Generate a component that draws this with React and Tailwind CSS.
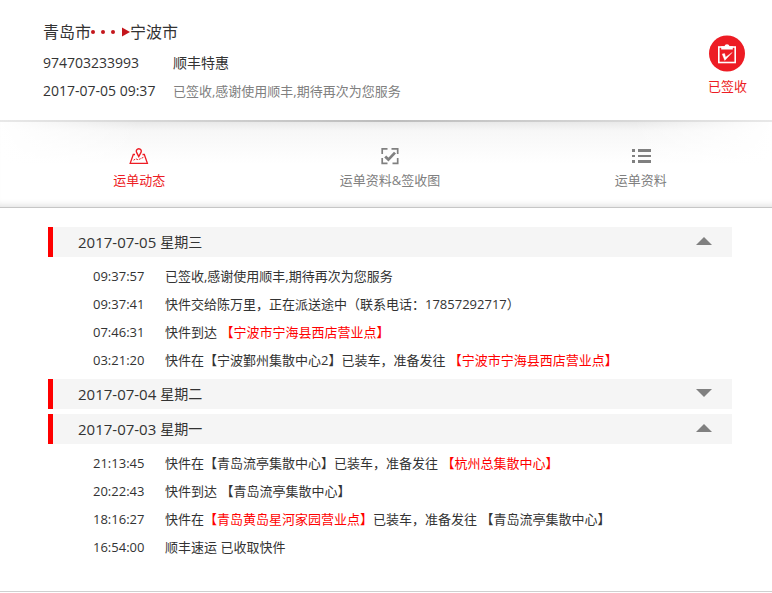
import React, { useState } from 'react';

const days = [
  {
    date: '2017-07-05',
    weekday: '星期三',
    open: true,
    events: [
      { time: '09:37:57', text: ['已签收,感谢使用顺丰,期待再次为您服务'] },
      { time: '09:37:41', text: ['快件交给陈万里，正在派送途中（联系电话：17857292717）'] },
      { time: '07:46:31', text: ['快件到达 ', { place: '【宁波市宁海县西店营业点】' }] },
      {
        time: '03:21:20',
        text: ['快件在【宁波鄞州集散中心2】已装车，准备发往 ', { place: '【宁波市宁海县西店营业点】' }],
      },
    ],
  },
  {
    date: '2017-07-04',
    weekday: '星期二',
    open: false,
    events: [],
  },
  {
    date: '2017-07-03',
    weekday: '星期一',
    open: true,
    events: [
      {
        time: '21:13:45',
        text: ['快件在【青岛流亭集散中心】已装车，准备发往 ', { place: '【杭州总集散中心】' }],
      },
      { time: '20:22:43', text: ['快件到达 【青岛流亭集散中心】'] },
      {
        time: '18:16:27',
        text: ['快件在', { place: '【青岛黄岛星河家园营业点】' }, '已装车，准备发往 【青岛流亭集散中心】'],
      },
      { time: '16:54:00', text: ['顺丰速运 已收取快件'] },
    ],
  },
];

function RouteArrow() {
  return (
    <svg width="39" height="12" viewBox="0 0 39 12" fill="#c4161c" aria-hidden="true">
      <circle cx="2" cy="6" r="2" />
      <circle cx="12" cy="6" r="2" />
      <circle cx="22" cy="6" r="2" />
      <path d="M31 1.5 39 6l-8 4.5z" />
    </svg>
  );
}

function SignedIcon() {
  return (
    <svg width="36" height="37" viewBox="0 0 36 37" aria-hidden="true">
      <circle cx="18" cy="18.5" r="18" fill="#ed1c24" />
      <rect x="9.8" y="12" width="16.4" height="15.5" fill="none" stroke="#fff" strokeWidth="1.6" />
      <path d="M12.2 14.6v-3.4h3.2a2.7 2.7 0 0 1 5.2 0h3.2v3.4z" fill="#fff" />
      <path d="M13.2 19l2.4-.4 1 3.6 6.6-4.8-7.4 8z" fill="#fff" stroke="#fff" strokeWidth=".4" />
    </svg>
  );
}

function MapIcon() {
  return (
    <svg width="20" height="18" viewBox="0 0 20 18" fill="none" stroke="currentColor" aria-hidden="true">
      <path d="M6 7.5H4.3L1.2 16.4h17.2L15.3 7.5h-1.8" strokeWidth="1.3" />
      <path d="M9.8 9.6 7.6 5.4a2.5 2.5 0 1 1 4.4 0z" strokeWidth="1.4" />
      <path d="M4.5 13.2l2.4-1.4 2.2 1 5.6-2.6" strokeWidth="1" strokeDasharray="2 1" />
    </svg>
  );
}

function ScanIcon() {
  return (
    <svg width="20" height="18" viewBox="0 0 20 18" fill="none" stroke="currentColor" aria-hidden="true">
      <path d="M7.5 1.9H2.2V7M11.5 1.9h6.2V7M2.2 11v5.3h5.3M17.7 11v5.3h-5.2" strokeWidth="1.7" />
      <path d="M5.2 9.4l3.2 3.2L15 5.6" strokeWidth="2.8" />
    </svg>
  );
}

function ListIcon() {
  return (
    <svg width="20" height="18" viewBox="0 0 20 18" fill="currentColor" aria-hidden="true">
      <path d="M1 2h3v3H1zM7 2h13v3H7zM1 8h3v2H1zM7 8h13v2H7zM1 13h3v3H1zM7 13h13v3H7z" />
    </svg>
  );
}

const tabs = [
  { id: 'track', label: '运单动态', Icon: MapIcon },
  { id: 'receipt', label: '运单资料&签收图', Icon: ScanIcon },
  { id: 'info', label: '运单资料', Icon: ListIcon },
];

function Summary() {
  return (
    <header className="flex items-start justify-between bg-white pl-[43px] pr-[25px] pb-[15px]">
      <div className="pt-[15px]">
        <h1 className="flex h-[34px] items-center text-base">
          青岛市
          <RouteArrow />
          宁波市
        </h1>
        <div className="grid grid-cols-[130px_auto] items-center">
          <span className="text-sm leading-7">974703233993</span>
          <span className="text-sm leading-7">顺丰特惠</span>
          <span className="text-sm leading-7">2017-07-05 09:37</span>
          <span className="text-[13px] leading-7 text-[#808080]">已签收,感谢使用顺丰,期待再次为您服务</span>
        </div>
      </div>
      <div className="flex flex-col items-center pt-[35px] text-[#ed1c24]">
        <SignedIcon />
        <span className="text-[13px] leading-7">已签收</span>
      </div>
    </header>
  );
}

function Tabs({ active, onChange }) {
  return (
    <div className="bg-linear-to-r from-[#e8e8e8] via-[#bcbcbc] to-[#e8e8e8] pt-0.5">
      <nav className="bg-white">
        <div className="flex border-b border-[#c6c6c6] bg-[linear-gradient(to_right,#fff,#fff0_18%,#fff0_82%,#fff),linear-gradient(#e9e9e9,#f7f7f7_9px,#fff_42px)] pt-[25px] pr-1.5 pl-[14px] shadow-[inset_0_-7px_6px_-5px_#e2e2e2]">
          {tabs.map(({ id, label, Icon }) => (
            <button
              key={id}
              type="button"
              onClick={() => onChange(id)}
              className={`flex flex-1 cursor-pointer flex-col items-center pb-3 text-[13px] ${
                active === id ? 'text-[#ed1c24]' : 'text-[#808080]'
              }`}
            >
              <Icon />
              <span className="leading-[30px]">{label}</span>
            </button>
          ))}
        </div>
      </nav>
    </div>
  );
}

function Day({ day }) {
  const [open, setOpen] = useState(day.open);

  return (
    <section>
      <button
        type="button"
        aria-expanded={open}
        onClick={() => setOpen(!open)}
        className="flex h-[30px] w-full cursor-pointer items-center justify-between border-l-5 border-[#ff0000] bg-[#f5f5f5] pr-5 pl-[25px]"
      >
        <span className="flex items-center gap-1">
          <span className="text-[15px]">{day.date}</span>
          <span className="text-sm">{day.weekday}</span>
        </span>
        <svg width="16" height="10" viewBox="0 0 16 10" fill="#808080" aria-hidden="true">
          <path d={open ? 'M0 8 8 0l8 8z' : 'M0 0h16L8 8z'} />
        </svg>
      </button>
      {open && day.events.length > 0 && (
        <ul className="pt-[5px] pl-[45px] text-[13px] leading-7">
          {day.events.map((event) => (
            <li key={event.time} className="flex">
              <span className="w-[72px] shrink-0">{event.time}</span>
              <p>
                {event.text.map((part, i) =>
                  part.place ? (
                    <span key={i} className="text-[#ff0000]">
                      {part.place}
                    </span>
                  ) : (
                    part
                  )
                )}
              </p>
            </li>
          ))}
        </ul>
      )}
    </section>
  );
}

export default function App() {
  const [active, setActive] = useState('track');

  return (
    <div className="bg-white font-['Open_Sans','Noto_Sans_CJK_SC',sans-serif] text-[#333]" lang="zh-CN">
      <Summary />
      <Tabs active={active} onChange={setActive} />
      <main className="flex flex-col gap-[5px] border-b border-[#d0d0d0] pt-[19px] pr-10 pb-[30px] pl-12">
        {days.map((day) => (
          <Day key={day.date} day={day} />
        ))}
      </main>
    </div>
  );
}
